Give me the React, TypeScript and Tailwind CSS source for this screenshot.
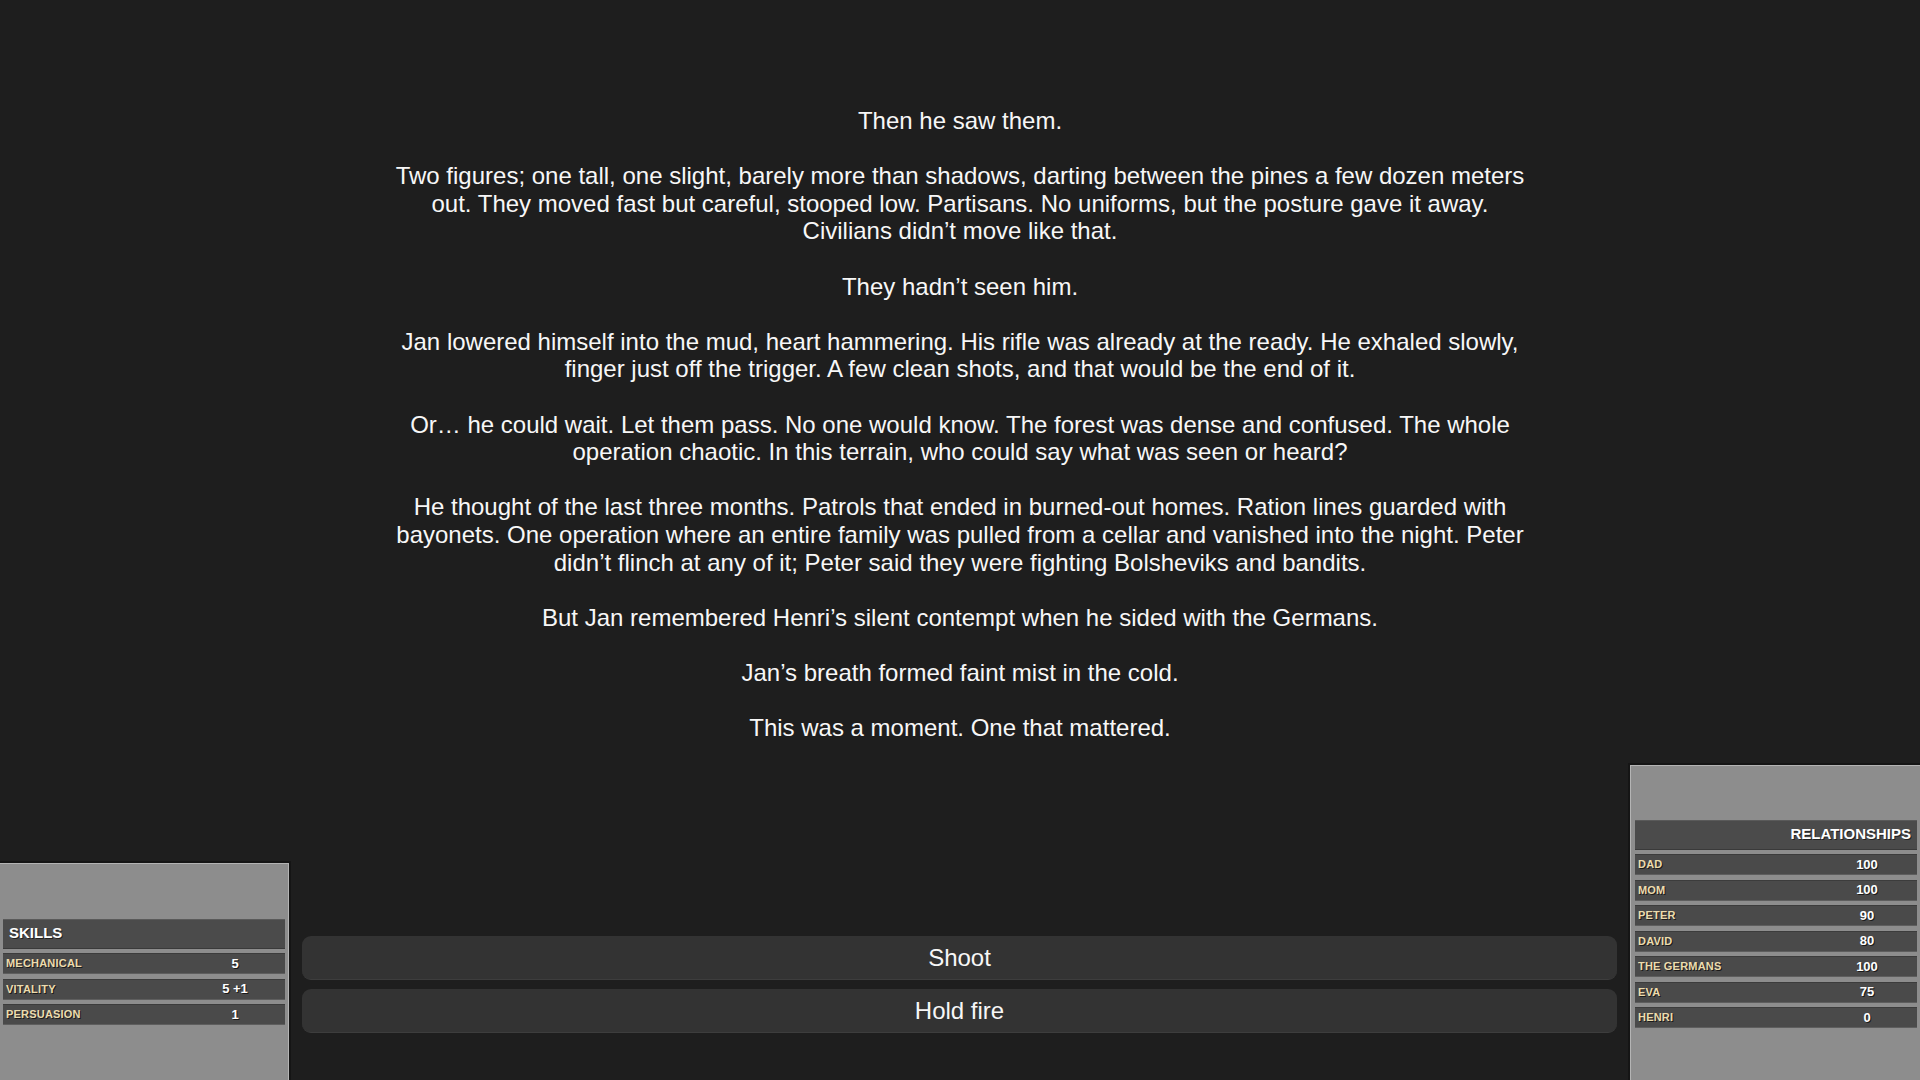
import React from 'react'

type StatRow = {
  label: string
  value: string
}

const story = [
  'Then he saw them.',
  'Two figures; one tall, one slight, barely more than shadows, darting between the pines a few dozen meters out. They moved fast but careful, stooped low. Partisans. No uniforms, but the posture gave it away. Civilians didn’t move like that.',
  'They hadn’t seen him.',
  'Jan lowered himself into the mud, heart hammering. His rifle was already at the ready. He exhaled slowly, finger just off the trigger. A few clean shots, and that would be the end of it.',
  'Or… he could wait. Let them pass. No one would know. The forest was dense and confused. The whole operation chaotic. In this terrain, who could say what was seen or heard?',
  'He thought of the last three months. Patrols that ended in burned-out homes. Ration lines guarded with bayonets. One operation where an entire family was pulled from a cellar and vanished into the night. Peter didn’t flinch at any of it; Peter said they were fighting Bolsheviks and bandits.',
  'But Jan remembered Henri’s silent contempt when he sided with the Germans.',
  'Jan’s breath formed faint mist in the cold.',
  'This was a moment. One that mattered.',
]

const skills: StatRow[] = [
  { label: 'Mechanical', value: '5' },
  { label: 'Vitality', value: '5 +1' },
  { label: 'Persuasion', value: '1' },
]

const relationships: StatRow[] = [
  { label: 'Dad', value: '100' },
  { label: 'Mom', value: '100' },
  { label: 'Peter', value: '90' },
  { label: 'David', value: '80' },
  { label: 'The Germans', value: '100' },
  { label: 'Eva', value: '75' },
  { label: 'Henri', value: '0' },
]

const choices = ['Shoot', 'Hold fire']

function StatPanel({
  title,
  rows,
  align,
  className,
}: {
  title: string
  rows: StatRow[]
  align: 'left' | 'right'
  className?: string
}) {
  return (
    <div
      className={`flex flex-col gap-[4.5px] bg-[#8d8d8d] shadow-[0_0_0_2px_#151515] ${className ?? ''}`}
    >
      <div
        className={`flex h-[30px] items-center border-t border-b border-t-[#5a5a5a] border-b-[#3a3a3a] bg-[#4b4b4b] px-[6px] text-[15px] font-bold text-white uppercase [text-shadow:1px_1px_0_#222] ${align === 'right' ? 'justify-end' : 'justify-start'}`}
      >
        {title}
      </div>

      {rows.map((row) => (
        <div
          key={row.label}
          className="flex h-[21px] items-center border-t border-b border-t-[#3c3c3c] border-b-[#5e5e5e] bg-[#4a4a4a]"
        >
          <span className="flex-1 pl-[3px] text-[11px] font-bold tracking-[0.2px] text-[#ecdcae] uppercase [text-shadow:1px_1px_0_#1a1a1a]">
            {row.label}
          </span>
          <span className="w-[100px] text-center text-[13px] font-bold text-white [text-shadow:1px_1px_0_#1a1a1a]">
            {row.value}
          </span>
        </div>
      ))}
    </div>
  )
}

export default function App() {
  return (
    <div className="flex h-[1080px] w-full flex-col justify-between overflow-hidden bg-[#1e1e1e] font-['Liberation_Sans',Arial,sans-serif]">
      <div className="mx-auto flex w-[1152px] flex-col gap-[27.6px] pt-[107px] text-center text-[24px] leading-[27.6px] text-[#f7f7f7]">
        {story.map((para) => (
          <p key={para}>{para}</p>
        ))}
      </div>

      <div className="flex items-end">
        <StatPanel
          title="Skills"
          rows={skills}
          align="left"
          className="w-[289px] border-t border-r border-[#b4b4b4] pt-[55px] pr-[3px] pb-[55px] pl-[3px]"
        />

        <div className="flex flex-1 flex-col gap-[9px] px-[13px] pb-[47px]">
          {choices.map((choice) => (
            <button
              key={choice}
              className="h-[44px] w-full rounded-[9px] border-b border-[#3d3d3d] bg-[#333333] text-[24px] text-[#f7f7f7]"
            >
              {choice}
            </button>
          ))}
        </div>

        <StatPanel
          title="Relationships"
          rows={relationships}
          align="right"
          className="w-[290px] border-t border-l border-[#b4b4b4] pt-[54px] pr-[3px] pb-[52px] pl-[4px]"
        />
      </div>
    </div>
  )
}
